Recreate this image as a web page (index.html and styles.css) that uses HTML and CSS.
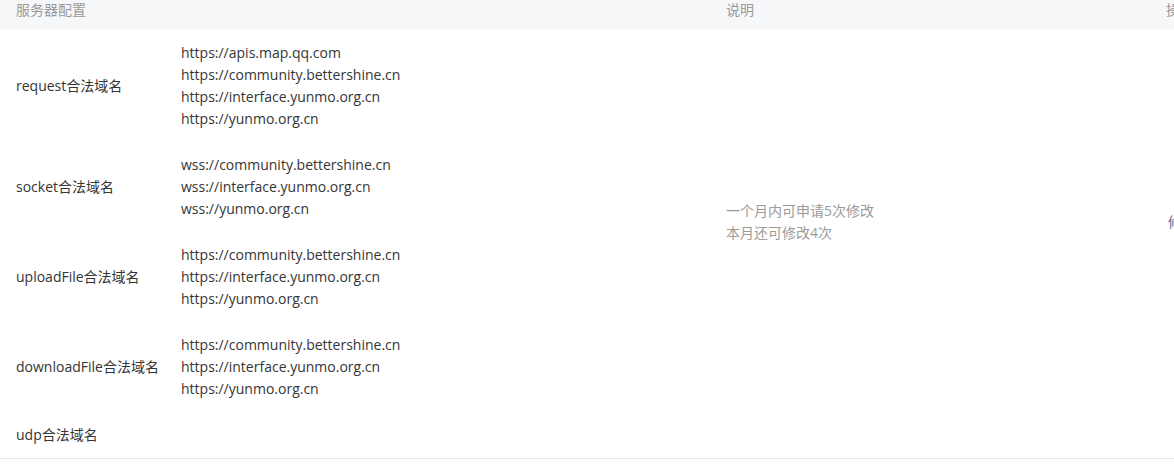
FILE: index.html
```html
<!DOCTYPE html>
<html lang="zh-CN">
<head>
<meta charset="utf-8">
<title>服务器配置</title>
<link rel="stylesheet" href="styles.css">
</head>
<body>
<div class="table">
  <div class="thead">
    <div class="th col-main">服务器配置</div>
    <div class="th col-desc">说明</div>
    <div class="th col-op">操作</div>
  </div>
  <div class="row">
    <div class="col-main groups">
      <div class="group">
        <div class="label">request合法域名</div>
        <ul class="urls">
          <li>https://apis.map.qq.com</li>
          <li>https://community.bettershine.cn</li>
          <li>https://interface.yunmo.org.cn</li>
          <li>https://yunmo.org.cn</li>
        </ul>
      </div>
      <div class="group">
        <div class="label">socket合法域名</div>
        <ul class="urls">
          <li>wss://community.bettershine.cn</li>
          <li>wss://interface.yunmo.org.cn</li>
          <li>wss://yunmo.org.cn</li>
        </ul>
      </div>
      <div class="group">
        <div class="label">uploadFile合法域名</div>
        <ul class="urls">
          <li>https://community.bettershine.cn</li>
          <li>https://interface.yunmo.org.cn</li>
          <li>https://yunmo.org.cn</li>
        </ul>
      </div>
      <div class="group">
        <div class="label">downloadFile合法域名</div>
        <ul class="urls">
          <li>https://community.bettershine.cn</li>
          <li>https://interface.yunmo.org.cn</li>
          <li>https://yunmo.org.cn</li>
        </ul>
      </div>
      <div class="group">
        <div class="label">udp合法域名</div>
        <ul class="urls"></ul>
      </div>
    </div>
    <div class="col-desc desc">
      <div class="desc-block">
        <p>一个月内可申请5次修改</p>
        <p>本月还可修改4次</p>
      </div>
    </div>
    <div class="col-op op">
      <a class="link" href="#">修改</a>
    </div>
  </div>
</div>
</body>
</html>
```
FILE: styles.css
```css
html, body {
  margin: 0;
  padding: 0;
  overflow: hidden;
  background: #ffffff;
}

body {
  font-family: "Open Sans", "Noto Sans CJK SC", sans-serif;
  font-size: 14px;
  color: #353535;
}

.table {
  width: 1280px;
}

.thead {
  display: flex;
  height: 30px;
  background: #f6f7f9;
}

.th {
  line-height: 20px;
  font-size: 14px;
  color: #9a9a9a;
}

.col-main {
  width: 710px;
  flex: none;
  box-sizing: border-box;
  padding-left: 16px;
}

.col-desc {
  width: 440px;
  flex: none;
  box-sizing: border-box;
  padding-left: 16px;
}

.col-op {
  flex: 1;
  box-sizing: border-box;
  padding-left: 16px;
}

.row {
  display: flex;
  border-bottom: 1px solid #e6e6e6;
}

.groups {
  display: flex;
  flex-direction: column;
}

.group {
  display: flex;
  align-items: center;
  padding: 12px 0;
  line-height: 22px;
}

.label {
  width: 165px;
  flex: none;
  line-height: 22px;
}

.urls {
  list-style: none;
  margin: 0;
  padding: 0;
}

.urls li {
  line-height: 22px;
  white-space: nowrap;
}

.desc {
  display: flex;
  align-items: center;
  color: #9a9a9a;
}

.desc-block {
  min-height: 88px;
}

.desc-block p {
  margin: 0;
  line-height: 22px;
}

.op {
  display: flex;
  align-items: center;
  padding-left: 18px;
  padding-bottom: 44px;
}

.link {
  color: #576b95;
  text-decoration: none;
  line-height: 22px;
}
```
